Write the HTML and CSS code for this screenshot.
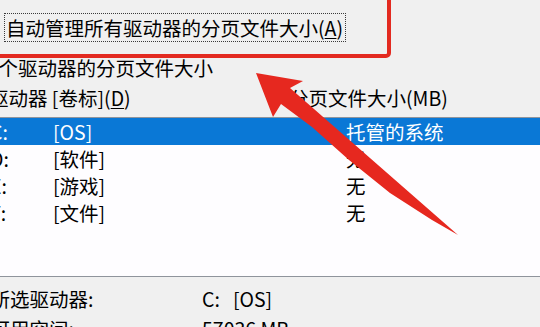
FILE: index.html
```html
<!DOCTYPE html>
<html lang="zh-CN">
<head>
<meta charset="utf-8">
<title>虚拟内存</title>
<link rel="stylesheet" href="styles.css">
</head>
<body>
<div class="dialog">
  <div class="auto-row">
    <span class="check-label">自动管理所有驱动器的分页文件大小(<u>A</u>)</span>
  </div>
  <div class="group-label">每个驱动器的分页文件大小</div>
  <div class="list-header">
    <span class="hdr-drive">驱动器 [卷标](<u>D</u>)</span>
    <span class="hdr-size">分页文件大小(MB)</span>
  </div>
  <div class="drive-list">
    <div class="row selected"><span>C:</span><span>[OS]</span><span>托管的系统</span></div>
    <div class="row"><span>D:</span><span>[软件]</span><span>无</span></div>
    <div class="row"><span>E:</span><span>[游戏]</span><span>无</span></div>
    <div class="row"><span>F:</span><span>[文件]</span><span>无</span></div>
  </div>
  <div class="info">
    <div class="info-row"><span class="i-key">所选驱动器:</span><span class="i-val">C:<span class="vol">[OS]</span></span></div>
    <div class="info-row"><span class="i-key">可用空间:</span><span class="i-val">57036 MB</span></div>
  </div>
  <div class="annot-box"></div>
  <svg class="annot-arrow" width="540" height="327" viewBox="0 0 540 327">
    <polygon points="256,73 303,81 290,88 458,235 432,220 390,193 349,160 312,127 281,104 273,117" fill="#e6281f"/>
  </svg>
</div>
</body>
</html>
```

FILE: styles.css
```css
html, body {
  margin: 0;
  padding: 0;
}
body {
  width: 540px;
  height: 327px;
  overflow: hidden;
  background: #f0f0f0;
}
.dialog {
  position: relative;
  width: 540px;
  height: 327px;
  overflow: hidden;
  background: #f0f0f0;
  color: #000;
  font-family: "Noto Sans CJK SC", "Microsoft YaHei", sans-serif;
  font-size: 19.5px;
}
u {
  text-decoration: underline;
  text-underline-offset: 2px;
  text-decoration-thickness: 1px;
}
.auto-row {
  height: 58px;
  padding-top: 13px;
  padding-left: 4px;
  box-sizing: border-box;
}
.check-label {
  display: inline-block;
  height: 29px;
  line-height: 27px;
  padding: 0 2px 0 1px;
  border: 1px dotted #3a3a3a;
  box-sizing: border-box;
  white-space: nowrap;
}
.group-label {
  height: 20px;
  line-height: 20px;
  margin-left: -21px;
  white-space: nowrap;
}
.list-header {
  display: flex;
  height: 39px;
  line-height: 39px;
  margin-left: -11px;
  white-space: nowrap;
}
.hdr-drive {
  width: 300px;
  flex: none;
}
.hdr-size {
  flex: none;
}
.drive-list {
  height: 160px;
  margin-left: -10px;
  width: 560px;
  box-sizing: border-box;
  border-top: 1px solid #8f949c;
  border-bottom: 1px solid #8f949c;
  background: #fefdff;
}
.row {
  display: grid;
  grid-template-columns: 63px 293px 1fr;
  height: 27px;
  line-height: 27px;
  white-space: nowrap;
}
.row.selected {
  background: #0a78d6;
  color: #fff;
}
.info {
  padding-top: 7px;
  margin-left: -9.5px;
}
.info-row {
  display: flex;
  height: 30px;
  line-height: 30px;
  white-space: nowrap;
}
.i-key {
  width: 211.5px;
  flex: none;
}
.vol {
  margin-left: 13px;
}
.annot-box {
  position: absolute;
  left: -10px;
  top: -10px;
  width: 401px;
  height: 68px;
  box-sizing: border-box;
  border: 4px solid #e32a20;
  border-radius: 5px;
}
.annot-arrow {
  position: absolute;
  left: 0;
  top: 0;
}
```
